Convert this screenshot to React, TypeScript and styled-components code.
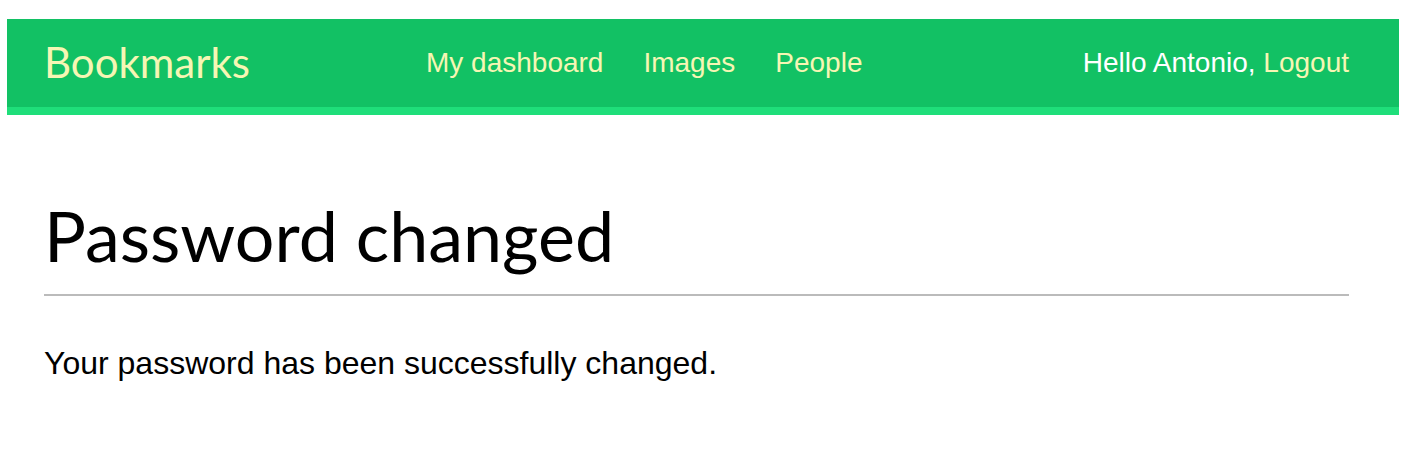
import React from "react";
import styled, { createGlobalStyle } from "styled-components";

const GlobalStyle = createGlobalStyle`
  html, body {
    margin: 0;
    padding: 0;
    background: #fff;
  }
  body {
    padding: 19px 21px 0 7px;
    font-family: "Liberation Sans", Arial, sans-serif;
  }
`;

const Header = styled.div`
  display: flex;
  align-items: center;
  height: 88px;
  padding: 0 50px 0 37px;
  background: #12c164;
  border-bottom: 8px solid #1fde7a;
`;

const Logo = styled.div`
  font-family: Lato, sans-serif;
  font-size: 42px;
  color: #f6f6b4;
  width: 382px;
  padding-bottom: 2px;
`;

const Menu = styled.ul`
  display: flex;
  gap: 40px;
  margin: 0;
  padding: 0;
  list-style: none;
  flex: 1;
`;

const MenuItem = styled.li`
  font-size: 28px;
  color: #f6f6b4;
`;

const User = styled.div`
  font-size: 28px;
  color: #fff;

  span {
    color: #f6f6b4;
  }
`;

const Content = styled.div`
  padding: 0 50px 0 37px;
`;

const Heading = styled.h1`
  font-family: Lato, sans-serif;
  font-weight: 400;
  font-size: 70px;
  margin: 0;
  padding: 78px 0 17px;
  border-bottom: 2px solid #bbb;
  color: #000;
  line-height: 1.2;
`;

const Text = styled.p`
  font-size: 32px;
  margin: 49px 0 0;
  color: #000;
`;

const App: React.FC = () => {
  return (
    <>
      <GlobalStyle />
      <Header>
        <Logo>Bookmarks</Logo>
        <Menu>
          <MenuItem>My dashboard</MenuItem>
          <MenuItem>Images</MenuItem>
          <MenuItem>People</MenuItem>
        </Menu>
        <User>
          Hello Antonio, <span>Logout</span>
        </User>
      </Header>
      <Content>
        <Heading>Password changed</Heading>
        <Text>Your password has been successfully changed.</Text>
      </Content>
    </>
  );
};

export default App;
